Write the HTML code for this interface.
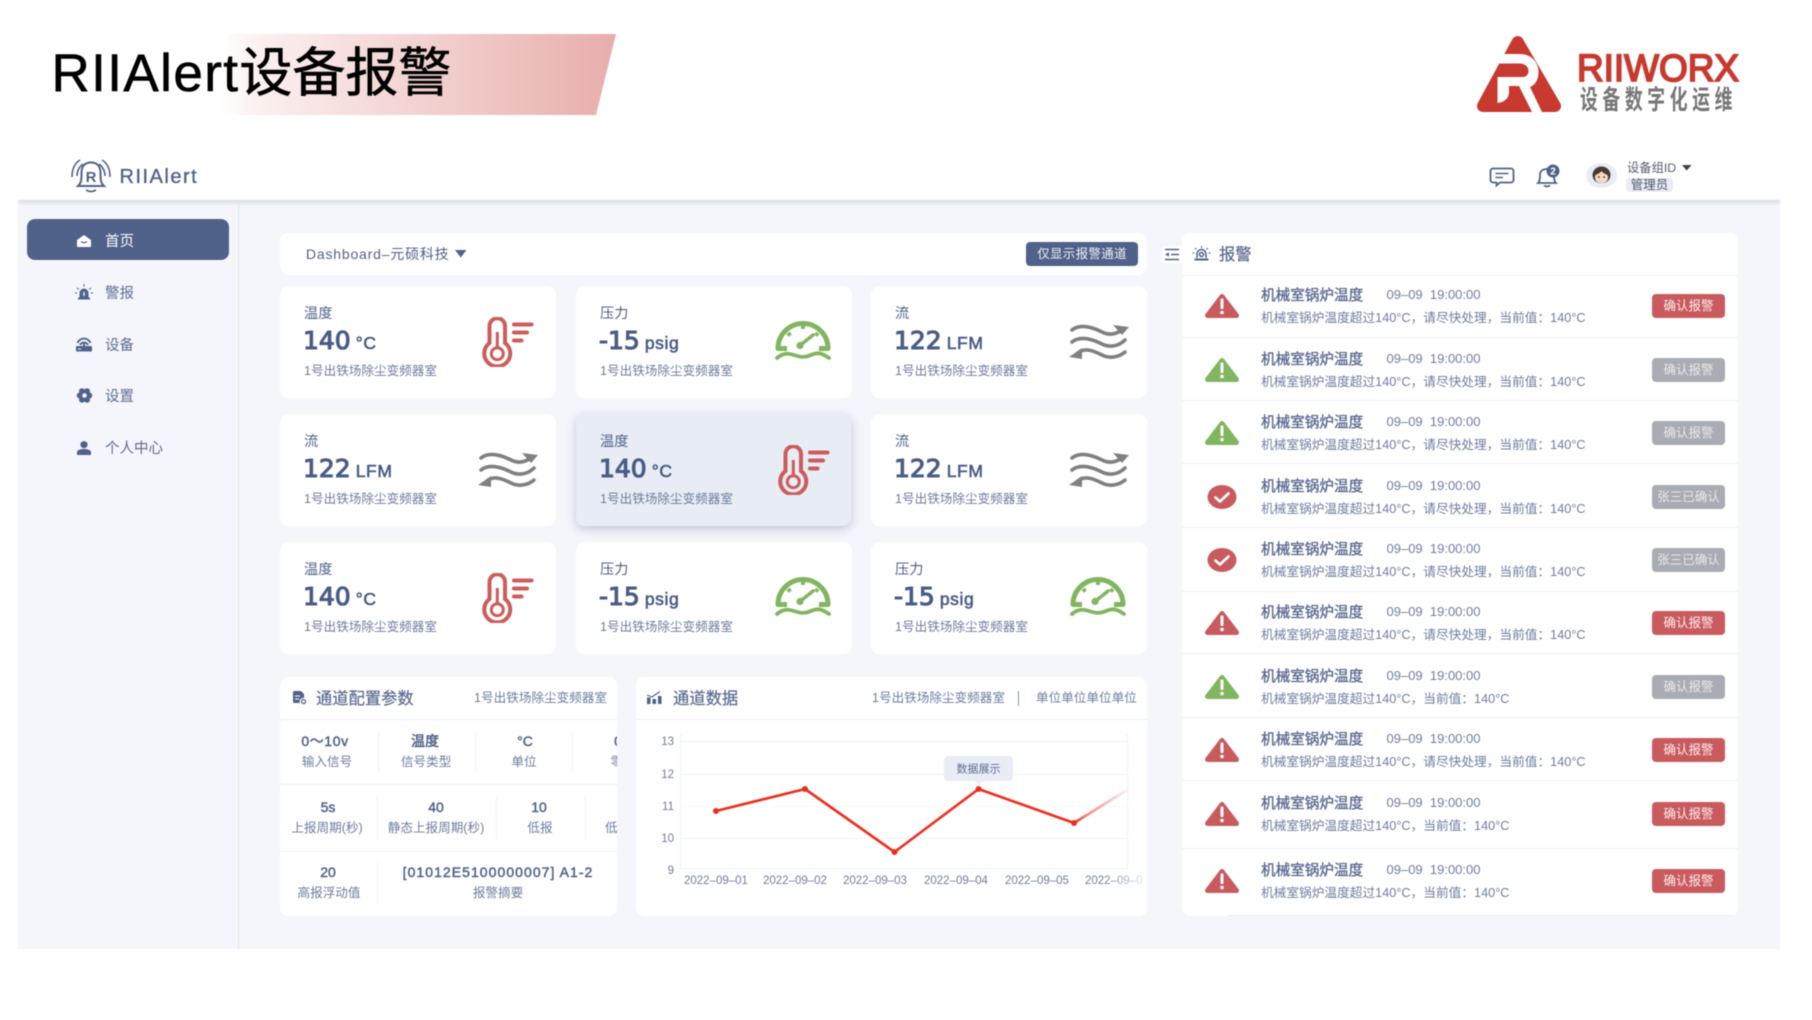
<!DOCTYPE html>
<html lang="zh-CN"><head><meta charset="utf-8"><title>RIIAlert</title>
<style>
html,body{margin:0;padding:0;background:#fff}
body{width:1812px;height:1020px;overflow:hidden;position:relative;font-family:"Liberation Sans","Noto Sans CJK SC",sans-serif;color:#50628a}
#w{position:absolute;left:0;top:0;width:1812px;height:1020px;overflow:hidden;filter:blur(.4px)}
#w div,#w span.a,#w svg.a{position:absolute}
.t{white-space:nowrap;line-height:20px}
.c{white-space:nowrap;line-height:20px;transform:translateX(-50%)}
.card{width:276px;height:112px;background:#fff;border-radius:8px}
.card .l{left:24px;top:18px;font-size:14.200px;line-height:20px;color:#50628a;white-space:nowrap}
.card .v{left:23px;top:40px;line-height:30px;white-space:nowrap;color:#4a5c86;font-family:"DejaVu Sans","Liberation Sans",sans-serif;font-size:25px;font-weight:400;-webkit-text-stroke:1.100px #4a5c86}
.card .v i{font-style:normal;font-family:"Liberation Sans",sans-serif;font-size:17.500px;margin-left:5px;letter-spacing:.6px;font-weight:400;-webkit-text-stroke:.6px #4a5c86}
.card .d{left:24px;top:75px;font-size:12.600px;line-height:20px;color:#6d7da0;white-space:nowrap}
.card svg{position:absolute}
.sb{left:105px;font-size:14.500px;line-height:20px;color:#5d6d92;white-space:nowrap}
.p{background:#fff;border-radius:8px;overflow:hidden}
.in{left:0;top:0;width:1812px;height:1020px}
.hl{height:1px;background:#edf0f6}
.vs{width:1px;background:#eef1f7}
.val{font-size:14px;font-weight:400;-webkit-text-stroke:.45px #50628a;color:#50628a}
.lab{font-size:12.600px;color:#6d7da0}
.ah{height:1px;left:1182px;width:556px;background:#eef0f6}
.r{left:0;width:1812px;height:40px}
.r .ti{left:1261px;top:-8px;font-size:14.600px;line-height:20px;font-weight:400;-webkit-text-stroke:.35px #5a6a90;color:#5a6a90;white-space:nowrap}
.r .tm{left:1386.5px;top:-9px;font-size:13px;line-height:20px;color:#6d7da0;white-space:pre}
.r .de{left:1261px;top:14px;font-size:12.700px;line-height:20px;color:#6d7da0;white-space:nowrap}
.r .b{left:1652px;top:0;width:73px;height:24px;border-radius:4px;background:#c95b5f;color:#fdeeee;font-size:12.500px;line-height:24px;text-align:center;white-space:nowrap}
.r .g{background:#a8acb3;color:#e9e9ea}
.r svg{position:absolute;left:1205px;top:0}
</style></head><body>
<svg width="0" height="0" style="position:absolute">
<defs>
<symbol id="th" viewBox="0 0 52 50"><path d="M7.500 26V9A7.700 7.700 0 0 1 23 9V26A13 13 0 1 1 7.500 26Z" fill="none" stroke="#cd5c5c" stroke-width="4"/><circle cx="15.300" cy="36.700" r="6" fill="none" stroke="#cd5c5c" stroke-width="3"/><path d="M15.300 15V31" stroke="#cd5c5c" stroke-width="3"/><path d="M32 7.500H49.500M32 15.500H45M32 23.500H39.500" stroke="#cd5c5c" stroke-width="4" stroke-linecap="round"/></symbol>
<symbol id="ga" viewBox="0 0 56 42"><path d="M12 28.500H3A25 25 0 0 1 53 28.500H44" fill="none" stroke="#82b560" stroke-width="5" stroke-linejoin="round"/><path d="M28 5V9M13 13L15.500 15.500M43 13L40.500 15.500" stroke="#82b560" stroke-width="4"/><circle cx="25" cy="25.500" r="3.600" fill="#82b560"/><path d="M25 25.500L38 15" stroke="#82b560" stroke-width="3.500" stroke-linecap="round"/><path d="M2 38C8 33 13 33 19 35S29 38 36 35S47 33 54 38" fill="none" stroke="#82b560" stroke-width="3.800" stroke-linecap="round"/></symbol>
<symbol id="fl" viewBox="0 0 60 36"><g fill="none" stroke="#808080" stroke-width="3.600" stroke-linecap="round"><path d="M3 6C12 -1 25 4 33 8C41 12 48 10 54 5"/><path d="M3 18C12 11 25 16 33 20C41 24 50 22 56 16"/><path d="M9 29C16 23 25 27 33 31C41 35 50 33 56 28"/></g><path d="M60 3L44 1L53 11Z" fill="#808080"/><path d="M0 33L13 24L13 35Z" fill="#808080"/></symbol>
<symbol id="tr" viewBox="0 0 34 24"><path d="M17 2.500L31.500 21.500H2.500Z" stroke-width="5" stroke-linejoin="round" fill="currentColor" stroke="currentColor"/><rect x="15.500" y="4.500" width="3" height="10.500" rx="1" fill="#fff"/><circle cx="17" cy="18.500" r="1.800" fill="#fff"/></symbol>
<symbol id="ok" viewBox="0 0 34 24"><ellipse cx="17" cy="12" rx="14.500" ry="12" fill="#c95b5f"/><path d="M10.500 12.500L15 16.500L23.500 8.500" fill="none" stroke="#fff" stroke-width="2.600" stroke-linecap="round" stroke-linejoin="round"/></symbol>
<linearGradient id="lg" gradientUnits="userSpaceOnUse" x1="1074" y1="823" x2="1127" y2="790"><stop offset="0" stop-color="#ee2d1f"/><stop offset=".25" stop-color="#ee2d1f" stop-opacity=".55"/><stop offset="1" stop-color="#ee2d1f" stop-opacity=".08"/></linearGradient>
<linearGradient id="tg" gradientUnits="userSpaceOnUse" x1="1085" y1="0" x2="1146" y2="0"><stop offset=".3" stop-color="#6d7da0"/><stop offset="1" stop-color="#6d7da0" stop-opacity=".15"/></linearGradient>
</defs></svg>
<div id="w">
<!-- title band -->
<svg class="a" style="left:0;top:0" width="700" height="130"><defs><linearGradient id="bg" gradientUnits="userSpaceOnUse" x1="219" x2="616" y1="0" y2="0"><stop offset="0" stop-color="#fff"/><stop offset=".1" stop-color="#fbf0ef"/><stop offset="1" stop-color="#e8aeac"/></linearGradient></defs><polygon points="228,34 616,34 596,115 219,115" fill="url(#bg)"/></svg>
<div class="t" style="left:51.500px;top:41px;font-size:53px;line-height:66px;color:#000;letter-spacing:1.400px;-webkit-text-stroke:.6px #000">RIIAlert<span style="letter-spacing:0">设备报警</span></div>
<!-- riiworx logo -->
<svg class="a" style="left:1470px;top:30px" width="100" height="90"><polygon points="47.700,12 13,76 85,76" fill="#c8392f" stroke="#c8392f" stroke-width="12" stroke-linejoin="round"/><path d="M20 24H50C62 24 68.500 33 68.500 42C68.500 50 65 55 60 57L72 82H62L49 56H39V62C39 68 35 72 27.500 73V47H54C57 46 58.500 44 58.500 41C58.500 36 54 33.500 50 33.500H20Z" fill="#fff"/></svg>
<svg class="a" style="left:1570px;top:45px" width="180" height="75"><text x="7" y="36" font-family="Liberation Sans" font-weight="400" stroke="#c8392f" stroke-width="1.800" font-size="38" fill="#c8392f" textLength="162" lengthAdjust="spacingAndGlyphs">RIIWORX</text><text transform="translate(10,64) scale(.66,1)" font-family="Noto Sans CJK SC" font-weight="700" font-size="27" letter-spacing="7" fill="#777">设备数字化运维</text></svg>
<!-- app -->
<div style="left:18px;top:201px;width:1762px;height:748px;background:#f4f6fb"></div>
<div style="left:18px;top:200px;width:1762px;height:2px;background:#dfe2e8;box-shadow:0 1px 3px rgba(80,98,138,.2)"></div>
<div style="left:238px;top:202px;width:1px;height:747px;background:#e3e6f0"></div>
<!-- header logo -->
<svg class="a" style="left:65px;top:155px" width="60" height="45" fill="none" stroke="#50628a" stroke-width="2"><path d="M13 31C16.500 28 16.500 24 16.500 18C16.500 11 20 7.500 26 7.500C32 7.500 35.500 11 35.500 18C35.500 24 35.500 28 39 31Z"/><path d="M21 35Q26 38 31 35" stroke-width="1.800"/><path d="M12 21C12 16 14 12 18 9M7 22C7 14 10 8 15 5M40 21C40 16 38 12 34 9M45 22C45 14 42 8 37 5" stroke-width="1.600"/><text x="26" y="27" text-anchor="middle" font-family="Liberation Sans" font-weight="700" font-size="15" fill="#50628a" stroke="none">R</text></svg>
<div class="t" style="left:119.500px;top:166px;font-size:20px;line-height:22px;letter-spacing:1.500px;color:#50628a;-webkit-text-stroke:.35px #50628a">RIIAlert</div>
<!-- top right -->
<svg class="a" style="left:1488px;top:165px" width="80" height="26" fill="none" stroke="#50628a" stroke-width="1.800"><path d="M5 3.500H23A2.500 2.500 0 0 1 25.500 6V15A2.500 2.500 0 0 1 23 17.500H12L8.500 20.500V17.500H5A2.500 2.500 0 0 1 2.500 15V6A2.500 2.500 0 0 1 5 3.500Z"/><path d="M7.500 8.500H20.500M7.500 12.500H15" stroke-width="1.500"/><path d="M50 18C52 16 52 13 52 10C52 6 55 4 59 4C63 4 66 6 66 10C66 13 66 16 68 18Z"/><path d="M56 20.500Q59 22.500 62 20.500"/></svg>
<svg class="a" style="left:1545px;top:163px" width="18" height="16"><circle cx="8" cy="8" r="6.500" fill="#50628a"/><text x="8" y="11.500" text-anchor="middle" font-family="Liberation Sans" font-weight="700" font-size="10" fill="#fff">2</text></svg>
<svg class="a" style="left:1585.500px;top:163px" width="32" height="26"><ellipse cx="15.500" cy="12.500" rx="15.500" ry="12.500" fill="#e8edf5"/><ellipse cx="15.500" cy="12" rx="9" ry="8.500" fill="#4d3a2e"/><ellipse cx="15.500" cy="14.500" rx="6.500" ry="6" fill="#f4d8c4"/><path d="M9 12Q13 11 15.500 8Q18 11 22 12V8H9Z" fill="#4d3a2e"/><circle cx="13" cy="14" r=".9" fill="#333"/><circle cx="18" cy="14" r=".9" fill="#333"/></svg>
<div class="t" style="left:1627px;top:158px;font-size:12.300px;color:#555c6a">设备组ID</div>
<svg class="a" style="left:1682px;top:165px" width="10" height="6"><path d="M0 0H9.500L4.750 5.500Z" fill="#3a3f4a"/></svg>
<div style="left:1626px;top:178px;width:47px;height:14px;border-radius:3px;background:#e8edf5;font-size:12.500px;line-height:15px;text-align:center;color:#50586a;white-space:nowrap">管理员</div>
<!-- sidebar -->
<div style="left:27px;top:219px;width:202px;height:41px;border-radius:8px;background:#50628a"></div>
<svg class="a" style="left:76px;top:234px" width="16" height="13"><path d="M8 1L15 6V13H1V6Z" fill="#fff"/><path d="M5 7.500Q8 10 11 7.500" fill="none" stroke="#50628a" stroke-width="1.200"/></svg>
<div class="sb" style="top:232px;color:#fff">首页</div>
<svg class="a" style="left:75px;top:284px" width="18" height="16" fill="#50628a"><path d="M4.500 14V9A4.500 4.500 0 0 1 13.500 9V14Z"/><rect x="3" y="13.500" width="12" height="2"/><path d="M9 0V2.500M2 4L4 5.500M16 4L14 5.500M0 9H2M18 9H16" stroke="#50628a" stroke-width="1"/><rect x="8.300" y="8" width="1.400" height="4" fill="#f4f6fb"/></svg>
<div class="sb" style="top:284px">警报</div>
<svg class="a" style="left:75px;top:336px" width="18" height="16"><path d="M5 9A4.500 4.500 0 0 1 13 9M2.500 7A7 7 0 0 1 15.500 7" fill="none" stroke="#50628a" stroke-width="1.900"/><rect x="8" y="7" width="2" height="4" fill="#50628a"/><rect x="1" y="10" width="16" height="5.500" rx="1" fill="#50628a"/><path d="M3 13H6" stroke="#f4f6fb" stroke-width="1"/></svg>
<div class="sb" style="top:335.500px">设备</div>
<svg class="a" style="left:76px;top:388px" width="17" height="15" fill="#50628a"><circle cx="8.500" cy="7.500" r="5"/><circle cx="13.300" cy="7.500" r="3"/><circle cx="3.700" cy="7.500" r="3"/><circle cx="11" cy="3.300" r="3"/><circle cx="6" cy="3.300" r="3"/><circle cx="11" cy="11.700" r="3"/><circle cx="6" cy="11.700" r="3"/><circle cx="8.500" cy="7.500" r="2.300" fill="#f4f6fb"/></svg>
<div class="sb" style="top:387px">设置</div>
<svg class="a" style="left:77px;top:441px" width="14" height="14" fill="#50628a"><circle cx="7" cy="3.700" r="3.600"/><path d="M0 14V11.500C0 9 3 8 7 8C11 8 14 9 14 11.500V14Z"/></svg>
<div class="sb" style="top:439px">个人中心</div>
<!-- dashboard bar -->
<div style="left:280px;top:233px;width:867px;height:42px;background:#fff;border-radius:8px"></div>
<div class="t" style="left:306px;top:244px;font-size:14px;color:#50628a;letter-spacing:.8px">Dashboard–元硕科技</div>
<svg class="a" style="left:455px;top:250px" width="12" height="8"><path d="M0 0H11.500L5.750 7.500Z" fill="#50628a"/></svg>
<div style="left:1026px;top:242px;width:112px;height:24px;border-radius:4px;background:#50628a;color:#f0f2f6;font-size:12.500px;line-height:24px;text-align:center;white-space:nowrap;letter-spacing:.3px">仅显示报警通道</div>
<!-- cards -->
<div class="card" style="left:280px;top:286px"><div class="l">温度</div><div class="v">140<i>°C</i></div><div class="d">1号出铁场除尘变频器室</div><svg style="left:202px;top:31px" width="52" height="50"><use href="#th"/></svg></div>
<div class="card" style="left:576px;top:286px"><div class="l">压力</div><div class="v">-15<i>psig</i></div><div class="d">1号出铁场除尘变频器室</div><svg style="left:199px;top:34px" width="56" height="42"><use href="#ga"/></svg></div>
<div class="card" style="left:871px;top:286px"><div class="l">流</div><div class="v">122<i>LFM</i></div><div class="d">1号出铁场除尘变频器室</div><svg style="left:198px;top:38px" width="60" height="36"><use href="#fl"/></svg></div>
<div class="card" style="left:280px;top:414px"><div class="l">流</div><div class="v">122<i>LFM</i></div><div class="d">1号出铁场除尘变频器室</div><svg style="left:198px;top:38px" width="60" height="36"><use href="#fl"/></svg></div>
<div class="card" style="left:576px;top:414px;width:275px;background:#e8edf5;box-shadow:0 3px 10px rgba(80,98,138,.32)"><div class="l">温度</div><div class="v">140<i>°C</i></div><div class="d">1号出铁场除尘变频器室</div><svg style="left:202px;top:31px" width="52" height="50"><use href="#th"/></svg></div>
<div class="card" style="left:871px;top:414px"><div class="l">流</div><div class="v">122<i>LFM</i></div><div class="d">1号出铁场除尘变频器室</div><svg style="left:198px;top:38px" width="60" height="36"><use href="#fl"/></svg></div>
<div class="card" style="left:280px;top:542px"><div class="l">温度</div><div class="v">140<i>°C</i></div><div class="d">1号出铁场除尘变频器室</div><svg style="left:202px;top:31px" width="52" height="50"><use href="#th"/></svg></div>
<div class="card" style="left:576px;top:542px"><div class="l">压力</div><div class="v">-15<i>psig</i></div><div class="d">1号出铁场除尘变频器室</div><svg style="left:199px;top:34px" width="56" height="42"><use href="#ga"/></svg></div>
<div class="card" style="left:871px;top:542px"><div class="l">压力</div><div class="v">-15<i>psig</i></div><div class="d">1号出铁场除尘变频器室</div><svg style="left:199px;top:34px" width="56" height="42"><use href="#ga"/></svg></div>
<!-- config panel -->
<div class="p" style="left:280px;top:677px;width:337px;height:239px"><div class="in" style="left:-280px;top:-677px">
<svg class="a" style="left:292px;top:690px" width="15" height="15" fill="#50628a"><path d="M1 2.500A1.500 1.500 0 0 1 2.500 1H9L12 4V8A3.500 3.500 0 0 0 8 13H2.500A1.500 1.500 0 0 1 1 11.500Z"/><circle cx="11.500" cy="11.500" r="2" fill="none" stroke="#50628a" stroke-width="1.200"/><path d="M3 6H8M3 9H7" stroke="#fff" stroke-width="1"/></svg>
<div class="t" style="left:316px;top:689px;font-size:16.300px;color:#5a6a90;-webkit-text-stroke:.2px #5a6a90">通道配置参数</div>
<div class="t" style="left:474px;top:688px;font-size:12.600px;color:#6d7da0">1号出铁场除尘变频器室</div>
<div class="hl" style="left:280px;top:719px;width:337px"></div>
<div class="hl" style="left:280px;top:784px;width:337px;background:#e8edf5"></div>
<div class="hl" style="left:280px;top:851px;width:337px"></div>
<div class="vs" style="left:378px;top:731px;height:42px"></div><div class="vs" style="left:475px;top:731px;height:42px"></div><div class="vs" style="left:572px;top:731px;height:42px"></div>
<div class="c val" style="left:325px;top:731px;letter-spacing:.6px">0～10v</div><div class="c lab" style="left:327px;top:752px">输入信号</div>
<div class="c val" style="left:425px;top:731px">温度</div><div class="c lab" style="left:426px;top:752px">信号类型</div>
<div class="c val" style="left:525px;top:731px">°C</div><div class="c lab" style="left:524px;top:752px">单位</div>
<div class="c val" style="left:618px;top:731px">0</div><div class="c lab" style="left:623px;top:752px">零点</div>
<div class="vs" style="left:377px;top:797px;height:42px"></div><div class="vs" style="left:496px;top:797px;height:42px"></div><div class="vs" style="left:585px;top:797px;height:42px"></div>
<div class="c val" style="left:328px;top:797px">5s</div><div class="c lab" style="left:327px;top:818px">上报周期(秒)</div>
<div class="c val" style="left:436px;top:797px">40</div><div class="c lab" style="left:436px;top:818px">静态上报周期(秒)</div>
<div class="c val" style="left:539px;top:797px">10</div><div class="c lab" style="left:540px;top:818px">低报</div>
<div class="t lab" style="left:605px;top:818px">低报浮动值</div>
<div class="vs" style="left:377px;top:862px;height:42px"></div>
<div class="c val" style="left:328px;top:862px">20</div><div class="c lab" style="left:329px;top:883px">高报浮动值</div>
<div class="c val" style="left:498px;top:862px;letter-spacing:1.050px">[01012E5100000007] A1-2</div><div class="c lab" style="left:498px;top:883px">报警摘要</div>
</div></div>
<!-- chart panel -->
<div class="p" style="left:636px;top:677px;width:511px;height:239px"><div class="in" style="left:-636px;top:-677px">
<svg class="a" style="left:646px;top:690px" width="17" height="15" fill="#50628a"><rect x="1" y="7.500" width="3.500" height="6.500"/><rect x="6.500" y="9" width="3.500" height="5"/><rect x="12" y="6" width="3.500" height="8"/><path d="M1 5L6 7L14 1.500" fill="none" stroke="#50628a" stroke-width="1.200"/></svg>
<div class="t" style="left:673px;top:689px;font-size:16.300px;color:#5a6a90;-webkit-text-stroke:.2px #5a6a90">通道数据</div>
<div class="t" style="left:872px;top:688px;font-size:12.600px;color:#6d7da0">1号出铁场除尘变频器室</div>
<div style="left:1018px;top:691px;width:1px;height:15px;background:#8593b0"></div>
<div class="t" style="left:1036px;top:688px;font-size:12.600px;color:#6d7da0">单位单位单位单位</div>
<div class="hl" style="left:636px;top:719px;width:511px"></div>
<svg class="a" style="left:636px;top:677px" width="511" height="239" viewBox="636 677 511 239" font-family="Liberation Sans">
<g stroke="#edf1f8" stroke-width="1" fill="none"><path d="M680.500 734V868.500H1127.500V734"/><path d="M680 741.500H1127M680 774.500H1127M680 838.500H1127"/><path d="M680 806.500H1127" stroke="#f7f8fb"/></g>
<g font-size="11.500" fill="#6d7da0" text-anchor="end"><text x="674" y="745">13</text><text x="674" y="778">12</text><text x="674" y="810">11</text><text x="674" y="842">10</text><text x="674" y="874">9</text></g>
<g font-size="11.500" fill="#6d7da0"><text x="684" y="884">2022–09–01</text><text x="763" y="884">2022–09–02</text><text x="843" y="884">2022–09–03</text><text x="924" y="884">2022–09–04</text><text x="1005" y="884">2022–09–05</text><text x="1085" y="884" fill="url(#tg)">2022–09–0</text></g>
<path d="M716 811L805 789L894.500 852L978.600 789L1074 823" fill="none" stroke="#ee2d1f" stroke-width="2.600" stroke-linejoin="round"/>
<path d="M1074 823L1127 790" fill="none" stroke="url(#lg)" stroke-width="2.600"/>
<g fill="#ee2d1f"><circle cx="716" cy="811" r="3"/><circle cx="805" cy="789" r="3"/><circle cx="894.500" cy="852" r="3"/><circle cx="978.600" cy="789" r="3"/><circle cx="1074" cy="823" r="3"/></g>
<rect x="944" y="756" width="69" height="25" rx="4" fill="#e8edf5"/><path d="M975 781H983L979 785Z" fill="#e8edf5"/>
<text x="978.500" y="772.500" text-anchor="middle" font-size="11" font-family="Noto Sans CJK SC" fill="#5d6d92">数据展示</text>
</svg>
</div></div>
<!-- alarm panel -->
<div style="left:1162px;top:246px;width:20px;height:17px;background:#fff;border-radius:2px 0 0 2px"></div>
<svg class="a" style="left:1164px;top:248px" width="16" height="13" stroke="#50628a" stroke-width="1.500"><path d="M1 1.500H15M7 6.500H15M1 11.500H15"/><path d="M1 6.500L5 4.500V8.500Z" fill="#50628a" stroke="none"/></svg>
<div class="p" style="left:1182px;top:233px;width:556px;height:683px"></div>
<svg class="a" style="left:1192px;top:246px" width="19" height="15" fill="none" stroke="#50628a" stroke-width="1.500"><path d="M5 12V8A4.500 4.500 0 0 1 14 8V12"/><circle cx="9.500" cy="8.500" r="2" /><path d="M2.500 13.500H16.500" stroke-width="2"/><path d="M9.500 0V2M3 2L4.500 3.500M16 2L14.500 3.500M0.500 7H2.500M18.500 7H16.500" stroke-width="1"/></svg>
<div class="t" style="left:1219px;top:245px;font-size:16.300px;color:#5a6a90;-webkit-text-stroke:.2px #5a6a90">报警</div>
<div class="ah" style="top:275px"></div><div class="ah" style="top:337px"></div><div class="ah" style="top:400px"></div><div class="ah" style="top:463px"></div><div class="ah" style="top:527px"></div><div class="ah" style="top:591px"></div><div class="ah" style="top:653px"></div><div class="ah" style="top:717px"></div><div class="ah" style="top:780px"></div><div class="ah" style="top:848px"></div>
<div class="ah" style="top:915px;left:1228px;width:505px;background:#e8edf5"></div>
<div class="r" style="top:294px"><svg width="34" height="24" style="color:#c95b5f"><use href="#tr"/></svg><div class="ti">机械室锅炉温度</div><div class="tm">09–09  19:00:00</div><div class="de">机械室锅炉温度超过140°C，请尽快处理，当前值：140°C</div><div class="b">确认报警</div></div>
<div class="r" style="top:358px"><svg width="34" height="24" style="color:#82b560"><use href="#tr"/></svg><div class="ti">机械室锅炉温度</div><div class="tm">09–09  19:00:00</div><div class="de">机械室锅炉温度超过140°C，请尽快处理，当前值：140°C</div><div class="b g">确认报警</div></div>
<div class="r" style="top:421px"><svg width="34" height="24" style="color:#82b560"><use href="#tr"/></svg><div class="ti">机械室锅炉温度</div><div class="tm">09–09  19:00:00</div><div class="de">机械室锅炉温度超过140°C，请尽快处理，当前值：140°C</div><div class="b g">确认报警</div></div>
<div class="r" style="top:485px"><svg width="34" height="24"><use href="#ok"/></svg><div class="ti">机械室锅炉温度</div><div class="tm">09–09  19:00:00</div><div class="de">机械室锅炉温度超过140°C，请尽快处理，当前值：140°C</div><div class="b g">张三已确认</div></div>
<div class="r" style="top:548px"><svg width="34" height="24"><use href="#ok"/></svg><div class="ti">机械室锅炉温度</div><div class="tm">09–09  19:00:00</div><div class="de">机械室锅炉温度超过140°C，请尽快处理，当前值：140°C</div><div class="b g">张三已确认</div></div>
<div class="r" style="top:611px"><svg width="34" height="24" style="color:#c95b5f"><use href="#tr"/></svg><div class="ti">机械室锅炉温度</div><div class="tm">09–09  19:00:00</div><div class="de">机械室锅炉温度超过140°C，请尽快处理，当前值：140°C</div><div class="b">确认报警</div></div>
<div class="r" style="top:675px"><svg width="34" height="24" style="color:#82b560"><use href="#tr"/></svg><div class="ti">机械室锅炉温度</div><div class="tm">09–09  19:00:00</div><div class="de">机械室锅炉温度超过140°C，当前值：140°C</div><div class="b g">确认报警</div></div>
<div class="r" style="top:738px"><svg width="34" height="24" style="color:#c95b5f"><use href="#tr"/></svg><div class="ti">机械室锅炉温度</div><div class="tm">09–09  19:00:00</div><div class="de">机械室锅炉温度超过140°C，请尽快处理，当前值：140°C</div><div class="b">确认报警</div></div>
<div class="r" style="top:802px"><svg width="34" height="24" style="color:#c95b5f"><use href="#tr"/></svg><div class="ti">机械室锅炉温度</div><div class="tm">09–09  19:00:00</div><div class="de">机械室锅炉温度超过140°C，当前值：140°C</div><div class="b">确认报警</div></div>
<div class="r" style="top:869px"><svg width="34" height="24" style="color:#c95b5f"><use href="#tr"/></svg><div class="ti">机械室锅炉温度</div><div class="tm">09–09  19:00:00</div><div class="de">机械室锅炉温度超过140°C，当前值：140°C</div><div class="b">确认报警</div></div>
</div>
</body></html>
